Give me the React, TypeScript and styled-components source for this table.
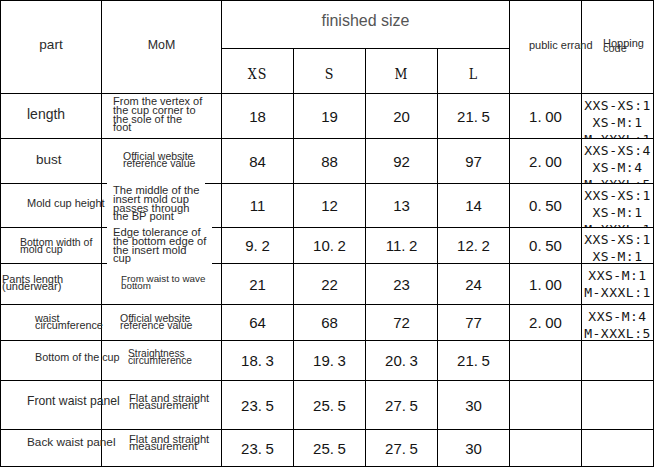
import React from "react";
import styled, { createGlobalStyle } from "styled-components";

const GlobalStyle = createGlobalStyle`
  html, body {
    margin: 0;
    padding: 0;
    background: #fff;
  }
  body {
    font-family: "Liberation Sans", Arial, sans-serif;
    color: #222;
  }
`;

interface Row {
  part: string;
  partSize: number;
  partLh?: number;
  partX: number;
  lift?: number;
  note: string;
  noteSize: number;
  noteLh: number;
  noteX: number;
  sizes: string[];
  fee?: string;
  code?: string[];
}

const rows: Row[] = [
  {
    part: "length",
    partSize: 14,
    partX: 26,
    lift: 3,
    note: "From the vertex of\nthe cup corner to\nthe sole of the\nfoot",
    noteSize: 11,
    noteLh: 8.8,
    noteX: 11,
    sizes: ["18", "19", "20", "21.5"],
    fee: "1.00",
    code: ["XXS-XS:1", "XS-M:1", "M-XXXL:1"],
  },
  {
    part: "bust",
    partSize: 13.5,
    partX: 35,
    lift: 3,
    note: "Official website\nreference value",
    noteSize: 10.5,
    noteLh: 6.5,
    noteX: 21,
    sizes: ["84", "88", "92", "97"],
    fee: "2.00",
    code: ["XXS-XS:4", "XS-M:4", "M-XXXL:5"],
  },
  {
    part: "Mold cup height",
    partSize: 11,
    partX: 26,
    lift: 4,
    note: "The middle of the\ninsert mold cup\npasses through\nthe BP point",
    noteSize: 11.2,
    noteLh: 8.8,
    noteX: 11,
    sizes: ["11", "12", "13", "14"],
    fee: "0.50",
    code: ["XXS-XS:1", "XS-M:1", "M-XXXL:1"],
  },
  {
    part: "Bottom width of\nmold cup",
    partSize: 10.5,
    partLh: 7,
    partX: 19,
    note: "Edge tolerance of\nthe bottom edge of\nthe insert mold\ncup",
    noteSize: 11.2,
    noteLh: 8.6,
    noteX: 11,
    sizes: ["9.2", "10.2", "11.2", "12.2"],
    fee: "0.50",
    code: ["XXS-XS:1", "XS-M:1"],
  },
  {
    part: "Pants length\n(underwear)",
    partSize: 11,
    partLh: 7,
    partX: 1,
    lift: 3,
    note: "From waist to wave\nbottom",
    noteSize: 9.8,
    noteLh: 6.5,
    noteX: 19,
    sizes: ["21", "22", "23", "24"],
    fee: "1.00",
    code: ["XXS-M:1", "M-XXXL:1"],
  },
  {
    part: "waist\ncircumference",
    partSize: 10.8,
    partLh: 7,
    partX: 34,
    lift: 2,
    note: "Official website\nreference value",
    noteSize: 10.5,
    noteLh: 6.5,
    noteX: 18,
    sizes: ["64", "68", "72", "77"],
    fee: "2.00",
    code: ["XXS-M:4", "M-XXXL:5"],
  },
  {
    part: "Bottom of the cup",
    partSize: 10.8,
    partX: 34,
    lift: 6,
    note: "Straightness\ncircumference",
    noteSize: 10.2,
    noteLh: 6.8,
    noteX: 26,
    sizes: ["18.3", "19.3", "20.3", "21.5"],
  },
  {
    part: "Front waist panel",
    partSize: 12.2,
    partX: 26,
    lift: 7,
    note: "Flat and straight\nmeasurement",
    noteSize: 11.2,
    noteLh: 6.8,
    noteX: 27,
    sizes: ["23.5", "25.5", "27.5", "30"],
  },
  {
    part: "Back waist panel",
    partSize: 11.8,
    partX: 26,
    lift: 11,
    note: "Flat and straight\nmeasurement",
    noteSize: 11.2,
    noteLh: 6.8,
    noteX: 27,
    sizes: ["23.5", "25.5", "27.5", "30"],
  },
];

const Num = ({ v }: { v: string }) => {
  const [whole, frac] = v.split(".");
  return (
    <>
      {whole}
      {frac !== undefined && (
        <>
          <Dot>.</Dot>
          {frac}
        </>
      )}
    </>
  );
};

const App = () => (
  <>
    <GlobalStyle />
    <Sheet>
      <Cell $col="1" $row="1 / 3" $pad="0 0 4px 0">
        <HeadText $size={13.6}>part</HeadText>
      </Cell>
      <Cell $col="2" $row="1 / 3" $pad="0 0 4px 0">
        <HeadText $size={12.4}>MoM</HeadText>
      </Cell>
      <Cell $col="3 / 7" $row="1" $pad="0 0 6px 0">
        <HeadText $size={16} $color="#555">
          finished size
        </HeadText>
      </Cell>
      <Cell $col="7" $row="1 / 3" $align="start" $pad="0 0 3px 19px">
        <HeadText $size={11}>public errand</HeadText>
      </Cell>
      <Cell $col="8" $row="1 / 3" $align="start" $pad="0 0 3px 21px">
        <HeadText $size={11} $lh={5}>
          {"Hopping\ncode"}
        </HeadText>
      </Cell>
      {["XS", "S", "M", "L"].map((s, i) => (
        <Cell key={s} $col={`${i + 3}`} $row="2" $pad="5px 0 0 0">
          <SizeLabel>{s}</SizeLabel>
        </Cell>
      ))}

      {rows.map((r) => (
        <React.Fragment key={r.part + r.sizes[0]}>
          <Cell $align="start" $pad={`0 0 ${r.lift ?? 0}px ${r.partX}px`}>
            <PartText $size={r.partSize} $lh={r.partLh}>
              {r.part}
            </PartText>
          </Cell>
          <Cell $align="start" $pad={`0 0 ${r.lift ?? 0}px ${r.noteX}px`}>
            <Note $size={r.noteSize} $lh={r.noteLh}>
              {r.note}
            </Note>
          </Cell>
          {r.sizes.map((s, i) => (
            <Cell key={i}>
              <Value>
                <Num v={s} />
              </Value>
            </Cell>
          ))}
          <Cell>
            {r.fee && (
              <Value>
                <Num v={r.fee} />
              </Value>
            )}
          </Cell>
          <Cell $clip $top>
            {r.code && <Code>{r.code.join("\n")}</Code>}
          </Cell>
        </React.Fragment>
      ))}
    </Sheet>
  </>
);

const Sheet = styled.div`
  display: grid;
  grid-template-columns: 100px 119px repeat(6, 71px);
  grid-template-rows: 47px 44px 44px 44px 43px 35px 40px 35px 39px 48px 36px;
  gap: 1px;
  padding: 1px;
  width: max-content;
  background: #000;
`;

const Cell = styled.div<{
  $col?: string;
  $row?: string;
  $align?: "start" | "center";
  $pad?: string;
  $clip?: boolean;
  $top?: boolean;
}>`
  grid-column: ${(p) => p.$col ?? "auto"};
  grid-row: ${(p) => p.$row ?? "auto"};
  position: relative;
  display: flex;
  align-items: ${(p) => (p.$top ? "flex-start" : "center")};
  justify-content: ${(p) => (p.$align === "start" ? "flex-start" : "center")};
  padding: ${(p) => p.$pad ?? "0"};
  min-width: 0;
  min-height: 0;
  overflow: ${(p) => (p.$clip ? "hidden" : "visible")};
  background: #fff;
`;

const HeadText = styled.span<{ $size: number; $color?: string; $lh?: number }>`
  position: relative;
  z-index: 2;
  font-size: ${(p) => p.$size}px;
  line-height: ${(p) => (p.$lh ? `${p.$lh}px` : 1.15)};
  color: ${(p) => p.$color ?? "#2b2b2b"};
  white-space: pre;
`;

const SizeLabel = styled.span`
  font-family: "DejaVu Serif Condensed", "Liberation Serif", serif;
  font-size: 14px;
  letter-spacing: 1px;
  color: #111;
`;

const PartText = styled.span<{ $size: number; $lh?: number }>`
  position: relative;
  z-index: 2;
  font-size: ${(p) => p.$size}px;
  line-height: ${(p) => (p.$lh ? `${p.$lh}px` : 1.15)};
  color: #2b2b2b;
  white-space: pre;
`;

const Note = styled.span<{ $size: number; $lh: number }>`
  position: relative;
  z-index: 1;
  margin-left: -6px;
  padding: 3px 6px;
  background: #fff;
  font-size: ${(p) => p.$size}px;
  line-height: ${(p) => p.$lh}px;
  color: #2b2b2b;
  white-space: pre;
`;

const Value = styled.span`
  font-size: 15px;
  color: #151515;
  white-space: nowrap;
`;

const Dot = styled.span`
  margin-right: 0.24em;
`;

const Code = styled.div`
  width: 100%;
  padding-top: 3px;
  font-family: "DejaVu Sans Mono", monospace;
  font-size: 13px;
  letter-spacing: 0.5px;
  line-height: 17px;
  text-align: center;
  color: #151515;
  white-space: pre;
`;

export default App;
